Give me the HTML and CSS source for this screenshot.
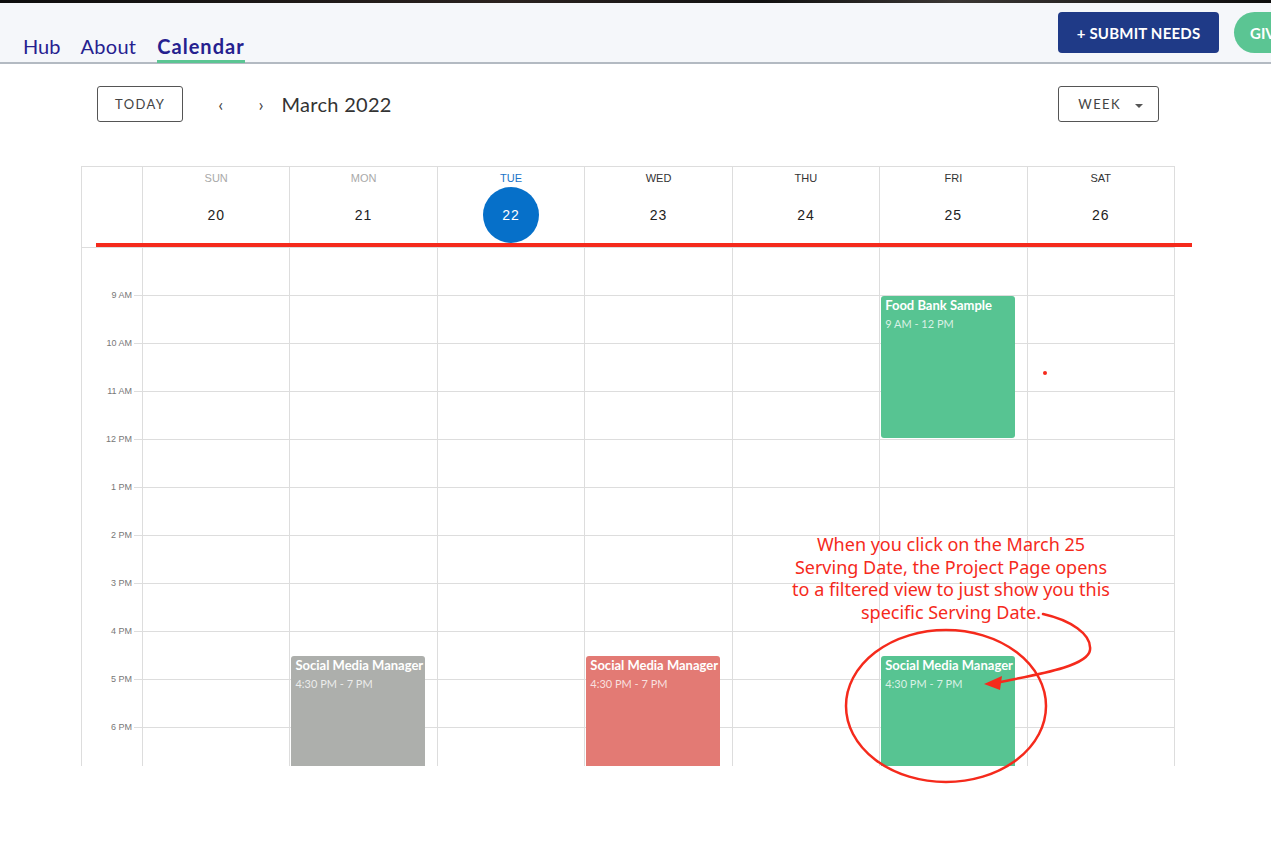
FILE: index.html
```html
<!DOCTYPE html>
<html lang="en">
<head>
<meta charset="UTF-8">
<meta name="viewport" content="width=device-width,initial-scale=1.0">
<title>Calendar</title>
<link rel="stylesheet" href="styles.css">
</head>
<body>

<!-- ===== Top bar ===== -->
<div class="photo-strip"></div>
<header class="topbar">
  <nav class="tabs">
    <a href="#">Hub</a>
    <a href="#">About</a>
    <a href="#" class="active">Calendar</a>
  </nav>
  <div class="actions">
    <button class="btn-submit">+ SUBMIT NEEDS</button>
    <button class="btn-give">GIVE</button>
  </div>
</header>

<!-- ===== Toolbar ===== -->
<div class="toolbar">
  <button class="btn-outline">TODAY</button>
  <span class="arrow">&#8249;</span>
  <span class="arrow">&#8250;</span>
  <span class="month">March 2022</span>
  <div class="spacer"></div>
  <button class="btn-outline btn-week">WEEK <span class="caret"></span></button>
</div>

<!-- ===== Week grid ===== -->
<div class="cal">
  <div class="cal-head">
    <div class="gutter"></div>
    <div class="day past"><small>SUN</small><b>20</b></div>
    <div class="day past"><small>MON</small><b>21</b></div>
    <div class="day today"><small>TUE</small><b>22</b></div>
    <div class="day"><small>WED</small><b>23</b></div>
    <div class="day"><small>THU</small><b>24</b></div>
    <div class="day"><small>FRI</small><b>25</b></div>
    <div class="day"><small>SAT</small><b>26</b></div>
  </div>
  <div class="cal-body">
    <div class="gutter">
      <span>9 AM</span><span>10 AM</span><span>11 AM</span><span>12 PM</span>
      <span>1 PM</span><span>2 PM</span><span>3 PM</span><span>4 PM</span>
      <span>5 PM</span><span>6 PM</span>
    </div>
    <div class="col"></div>
    <div class="col">
      <div class="event grey" style="top:408px;height:120px">
        <strong>Social Media Manager</strong><span>4:30 PM - 7 PM</span>
      </div>
    </div>
    <div class="col"></div>
    <div class="col">
      <div class="event red" style="top:408px;height:120px">
        <strong>Social Media Manager</strong><span>4:30 PM - 7 PM</span>
      </div>
    </div>
    <div class="col"></div>
    <div class="col">
      <div class="event green" style="top:48px;height:142px">
        <strong>Food Bank Sample</strong><span>9 AM - 12 PM</span>
      </div>
      <div class="event green" style="top:408px;height:120px">
        <strong>Social Media Manager</strong><span>4:30 PM - 7 PM</span>
      </div>
    </div>
    <div class="col"></div>
  </div>
</div>

<!-- ===== Annotation layer ===== -->
<div class="mark-line"></div>
<div class="mark-dot"></div>
<p class="note">When you click on the March 25<br>Serving Date, the Project Page opens<br>to a filtered view to just show you this<br>specific Serving Date.</p>
<svg class="mark-svg" width="300" height="200" viewBox="0 0 300 200">
  <ellipse cx="146" cy="106" rx="100" ry="76" fill="none" stroke="#f52a1c" stroke-width="2.5"/>
  <path d="M243 14 C 270 20, 292 34, 290 50 C 288 66, 240 74, 200 82" fill="none" stroke="#f52a1c" stroke-width="2.5" stroke-linecap="round"/>
  <path d="M184 84 L 202 76 L 200 90 Z" fill="#f52a1c"/>
</svg>

</body>
</html>
```

FILE: styles.css
```css
:root{
  --navy:#1f3a87;
  --green:#57c492;
  --line:#dddddd;
  --mark:#f52a1c;
  font-family:'Lato','Noto Sans',sans-serif;
}
*{box-sizing:border-box}
html,body{margin:0;padding:0}
body{position:relative;width:1271px;height:854px;overflow:hidden;background:#fff;color:#222}
button{font-family:inherit;cursor:pointer}

/* ===== Top bar ===== */
.photo-strip{height:3px;background:linear-gradient(90deg,#0d0d0d,#2a221f 40%,#111 60%,#3a3633 75%,#0d0d0d)}
.topbar{
  height:61px;background:#f5f7fa;border-bottom:2px solid #b3bac2;
  display:flex;align-items:flex-start;justify-content:space-between;padding-left:23px
}
.tabs{display:flex;gap:20px;align-self:flex-end}
.tabs a{
  color:#25218f;text-decoration:none;font-size:20px;line-height:24px;
  padding-bottom:2px;border-bottom:3px solid transparent;margin-bottom:-1px
}
.tabs a:nth-child(2){letter-spacing:.3px}
.tabs a.active{font-weight:700;border-bottom-color:#5bc593;letter-spacing:1px;margin-left:1px}
.actions{display:flex;gap:15px;padding-top:9px}
.btn-submit{
  width:161px;height:41px;border:none;border-radius:4px;background:var(--navy);
  color:#fff;font-weight:700;font-size:15px;letter-spacing:.2px
}
.btn-give{
  width:110px;height:41px;border:none;border-radius:21px;background:#5bc593;
  color:#fff;font-weight:700;font-size:15px;text-align:left;padding-left:16px;
  margin-right:-73px
}

/* ===== Toolbar ===== */
.toolbar{display:flex;align-items:center;margin:22px 0 0 97px;width:1062px;height:36px}
.btn-outline{
  height:36px;padding:0 17px;border:1px solid #555;border-radius:3px;background:#fff;
  color:#444;font-size:13px;letter-spacing:1.4px
}
.arrow{font-size:18px;color:#444;margin-left:35px;line-height:1}
.arrow + .arrow{margin-left:35px}
.month{font-size:20px;color:#333;margin-left:18px;letter-spacing:.3px}
.spacer{flex:1}
.btn-week{width:101px;padding:0 0 0 4px}
.caret{
  display:inline-block;margin-left:9px;vertical-align:middle;
  border-left:4px solid transparent;border-right:4px solid transparent;border-top:4px solid #555
}

/* ===== Week grid ===== */
.cal{
  margin:44px 0 0 81px;width:1094px;
  border:1px solid var(--line);border-bottom:none
}
.cal-head,.cal-body{display:grid;grid-template-columns:60px repeat(7,1fr)}
.cal-head{height:81px;border-bottom:1px solid var(--line)}
.day{
  border-left:1px solid var(--line);display:flex;flex-direction:column;align-items:center;
  font-family:'Liberation Sans','DejaVu Sans',sans-serif
}
.day small{font-size:11px;color:#333;margin-top:5px;line-height:12px}
.day b{
  font-weight:400;font-size:14px;letter-spacing:1px;color:#222;
  width:56px;height:56px;border-radius:50%;display:flex;align-items:center;justify-content:center;
  margin-top:3px
}
.day.past small{color:#a9a9a9}
.day.today small{color:#1a73c8}
.day.today b{background:#0670c9;color:#fff}

.cal-body{
  position:relative;height:518px;overflow:hidden;
  background-image:repeating-linear-gradient(to bottom,transparent 0 47px,var(--line) 47px 48px);
  background-position:52px 0;background-size:calc(100% - 52px) 100%;background-repeat:no-repeat
}
.cal-body .gutter{display:flex;flex-direction:column;padding-top:40px;background:linear-gradient(90deg,#fff 52px,transparent 52px)}
.gutter span{
  height:48px;line-height:14px;font-size:9px;color:#777;text-align:right;padding-right:10px;
  font-family:'Liberation Sans',sans-serif
}
.col{position:relative;border-left:1px solid var(--line)}
.event{
  position:absolute;left:1px;width:134px;border-radius:3px;padding:2px 4px;
  color:#fff;display:flex;flex-direction:column;gap:4px
}
.event strong{font-size:13px;font-weight:700;line-height:15px;white-space:nowrap}
.event span{font-size:11px;line-height:14px;color:rgba(255,255,255,.78)}
.event.green{background:var(--green)}
.event.grey{background:#adafac}
.event.red{background:#e37a74}

/* ===== Annotation layer ===== */
.mark-line{position:absolute;left:96px;top:243px;width:1096px;height:4px;background:var(--mark)}
.mark-dot{position:absolute;left:1043px;top:371px;width:4px;height:4px;border-radius:50%;background:var(--mark)}
.note{
  position:absolute;left:751px;top:533px;width:400px;margin:0;text-align:center;
  font-family:'Noto Sans',sans-serif;font-size:18px;line-height:22.5px;color:var(--mark)
}
.mark-svg{position:absolute;left:800px;top:600px}
```
